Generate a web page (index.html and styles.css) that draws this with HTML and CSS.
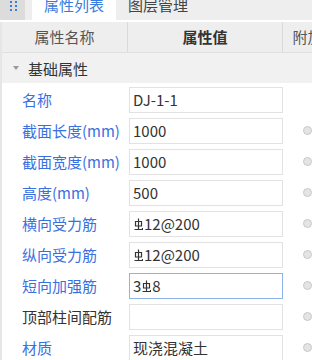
FILE: index.html
```html
<!DOCTYPE html>
<html lang="zh">
<head>
    <meta charset="UTF-8">
    <meta name="viewport" content="width=device-width, initial-scale=1.0">
    <title>属性列表</title>
    <link rel="stylesheet" href="styles.css">
</head>
<body>
    <div class="panel">
        <!-- 顶部标签 -->
        <div class="tabs">
            <div class="tab-icon">
                <span></span><span></span><span></span><span></span><span></span><span></span>
            </div>
            <div class="tab active">属性列表</div>
            <div class="tab">图层管理</div>
        </div>

        <div class="grid">
            <div class="grid-head">
                <div class="head-cell">属性名称</div>
                <div class="head-cell strong">属性值</div>
                <div class="head-cell">附加</div>
            </div>

            <div class="group"><i class="caret"></i>基础属性</div>

            <div class="rows">
                <div class="row">
                    <div class="label">名称</div>
                    <div class="value">DJ-1-1</div>
                    <div class="extra"></div>
                </div>
                <div class="row">
                    <div class="label">截面长度(mm)</div>
                    <div class="value">1000</div>
                    <div class="extra"><span class="dot"></span></div>
                </div>
                <div class="row">
                    <div class="label">截面宽度(mm)</div>
                    <div class="value">1000</div>
                    <div class="extra"><span class="dot"></span></div>
                </div>
                <div class="row">
                    <div class="label">高度(mm)</div>
                    <div class="value">500</div>
                    <div class="extra"><span class="dot"></span></div>
                </div>
                <div class="row">
                    <div class="label">横向受力筋</div>
                    <div class="value"><svg class="steel" viewBox="0 0 9 14"><path d="M4.5 0.5V11M1.5 3.5H7.5V8H1.5ZM0.5 11.5H8.5V10"/></svg>12@200</div>
                    <div class="extra"><span class="dot"></span></div>
                </div>
                <div class="row">
                    <div class="label">纵向受力筋</div>
                    <div class="value"><svg class="steel" viewBox="0 0 9 14"><path d="M4.5 0.5V11M1.5 3.5H7.5V8H1.5ZM0.5 11.5H8.5V10"/></svg>12@200</div>
                    <div class="extra"><span class="dot"></span></div>
                </div>
                <div class="row">
                    <div class="label">短向加强筋</div>
                    <div class="value focus">3<svg class="steel" viewBox="0 0 9 14"><path d="M4.5 0.5V11M1.5 3.5H7.5V8H1.5ZM0.5 11.5H8.5V10"/></svg>8</div>
                    <div class="extra"><span class="dot"></span></div>
                </div>
                <div class="row">
                    <div class="label plain">顶部柱间配筋</div>
                    <div class="value"></div>
                    <div class="extra"><span class="dot"></span></div>
                </div>
                <div class="row">
                    <div class="label">材质</div>
                    <div class="value">现浇混凝土</div>
                    <div class="extra"><span class="dot"></span></div>
                </div>
            </div>
        </div>
    </div>
</body>
</html>
```

FILE: styles.css
```css
/* 整体 */
body {
    margin: 0;
    background-color: #fff;
    font-family: "Noto Sans CJK SC", "Noto Sans", sans-serif;
    font-size: 15px;
    color: #333;
    overflow: hidden;
}

.panel {
    width: 333px;
}

/* 顶部标签 */
.tabs {
    display: flex;
    height: 30px;
    margin-top: -10px;
    background-color: #eeeeee;
    line-height: 30px;
}

.tab-icon {
    width: 25px;
    margin-right: 7px;
    background-color: #dcdcdc;
    display: grid;
    grid-template-columns: 2px 2px;
    grid-auto-rows: 2px;
    column-gap: 3px;
    row-gap: 2px;
    padding-top: 11px;
    padding-left: 10px;
    box-sizing: border-box;
}

.tab-icon span {
    background-color: #3b7ddd;
}

.tab {
    width: 84px;
    text-align: center;
    color: #444;
}

.tab.active {
    background-color: #fff;
    color: #3a7be0;
}

/* 表格 */
.grid {
    margin-top: 2px;
    border-left: 2px solid #e6e6e6;
}

.grid-head {
    display: grid;
    grid-template-columns: 126px 155px 50px;
    height: 30px;
    background-color: #eeeeee;
    border-bottom: 1px solid #e0e0e0;
    line-height: 30px;
}

.head-cell {
    text-align: center;
    color: #555;
    border-right: 1px solid #dadada;
}

.head-cell.strong {
    color: #333;
    font-weight: 600;
}

.group {
    display: flex;
    align-items: center;
    height: 30px;
    background-color: #f1f1f1;
    padding-left: 11px;
}

.caret {
    width: 0;
    height: 0;
    border-left: 3px solid transparent;
    border-right: 3px solid transparent;
    border-top: 4px solid #999;
    margin-right: 9px;
}

.rows {
    padding-top: 4px;
}

.row {
    display: grid;
    grid-template-columns: 127px 154px 50px;
    height: 31px;
}

.label {
    line-height: 26px;
    padding-left: 20px;
    color: #3a6fdf;
    white-space: nowrap;
}

.label.plain {
    color: #333;
}

.value {
    height: 26px;
    box-sizing: border-box;
    border: 1px solid #e2e2e2;
    padding-left: 3px;
    line-height: 24px;
    white-space: nowrap;
}

.value.focus {
    border-color: #8db2ec;
}

.steel {
    width: 9px;
    height: 14px;
    margin: 0 1px;
    vertical-align: -2px;
    fill: none;
    stroke: #333;
    stroke-width: 1.2;
}

.extra {
    padding-left: 20px;
    padding-top: 8px;
}

.dot {
    display: block;
    width: 9px;
    height: 9px;
    box-sizing: border-box;
    border-radius: 50%;
    background-color: #e4e4e4;
    border: 1px solid #c8c8c8;
}
```
